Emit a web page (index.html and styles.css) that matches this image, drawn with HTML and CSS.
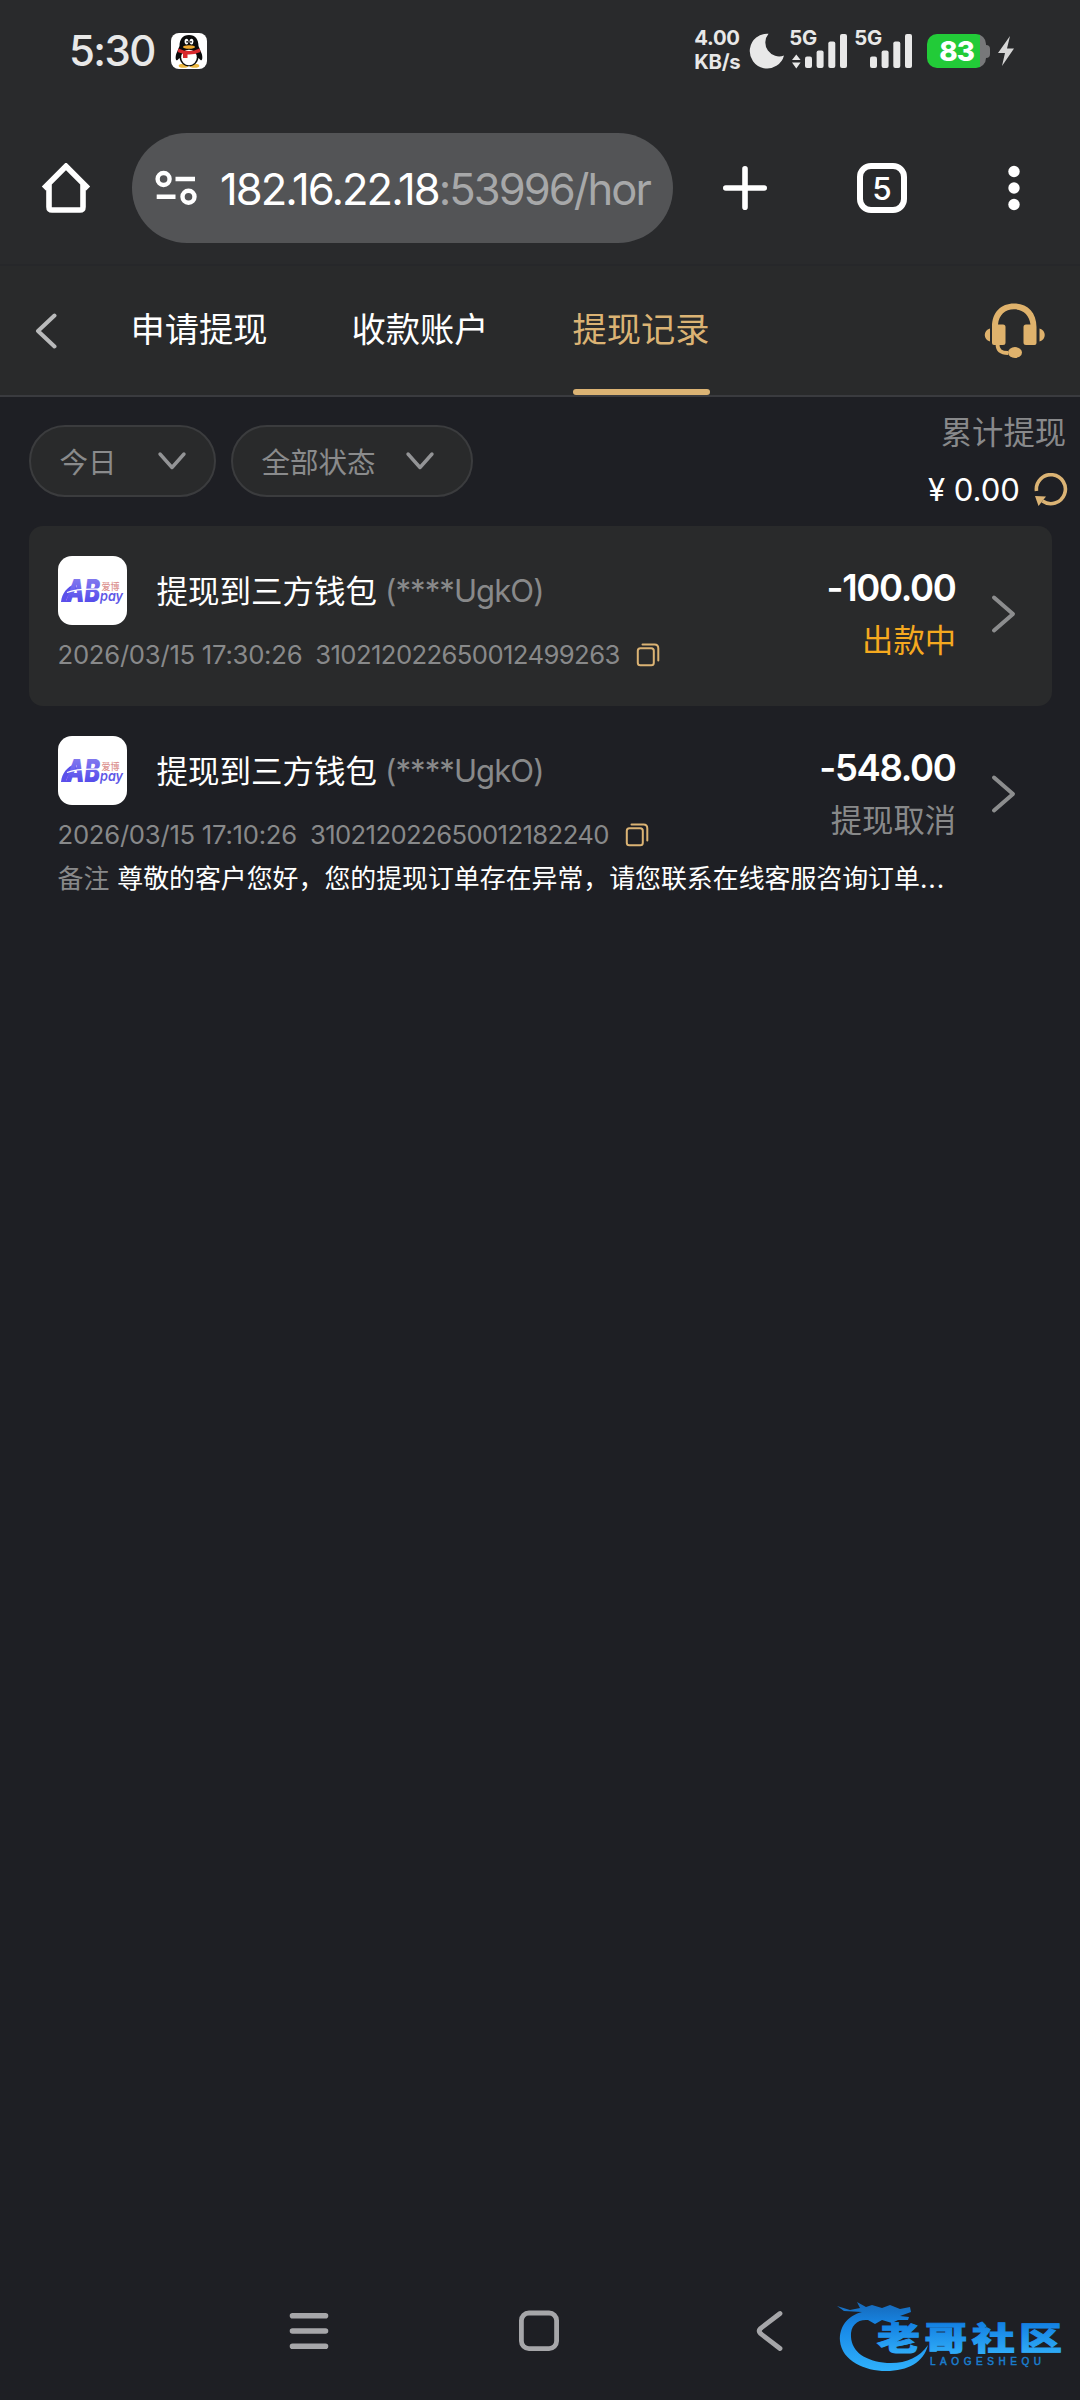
FILE: index.html
```html
<!DOCTYPE html>
<html lang="zh-CN">
<head>
<meta charset="utf-8">
<title>提现记录</title>
<link rel="stylesheet" href="styles.css">
</head>
<body>
<svg class="defs" width="0" height="0" aria-hidden="true">
  <defs>
    <linearGradient id="ab" x1="0" y1="0" x2="0" y2="1"><stop offset="0" stop-color="#8f86ee"/><stop offset=".5" stop-color="#6a62ee"/><stop offset="1" stop-color="#4a3fe8"/></linearGradient>
    <symbol id="copy" viewBox="0 0 24 24"><rect x="1.8" y="5.3" width="16" height="17" rx="2.5" fill="none" stroke="#dbb374" stroke-width="2"/><path d="M6.5 1.6H18.5Q22.3 1.6 22.3 5.4V17.5" fill="none" stroke="#dbb374" stroke-width="2" stroke-linecap="round"/></symbol>
    <symbol id="down" viewBox="0 0 30 20"><path d="M3 3L15 16.5L27 3" fill="none" stroke="#939496" stroke-width="3.4" stroke-linecap="round" stroke-linejoin="round"/></symbol>
    <symbol id="next" viewBox="0 0 26 40"><path d="M4 3.5L23 20L4 36.5" fill="none" stroke="#8c8d8e" stroke-width="4" stroke-linecap="round" stroke-linejoin="round"/></symbol>
    <symbol id="abpay" viewBox="0 0 69 69">
      <path d="M3 46C4 37 9 31 17 28L20 34C12 36 9 40 8 46Z" fill="#5a50ea"/>
      <text x="8" y="46" font-family="Inter" font-style="italic" font-weight="900" font-size="31" textLength="34" lengthAdjust="spacingAndGlyphs" fill="url(#ab)">AB</text>
      <path d="M9 36.500C17 33.200 29 32.800 41 33.200" fill="none" stroke="#fff" stroke-width="1.300"/>
      <text x="42" y="44.500" font-family="Inter" font-style="italic" font-weight="600" font-size="14" textLength="23" lengthAdjust="spacingAndGlyphs" fill="#5f57e6">pay</text>
      <text x="43.500" y="33.500" font-family="Noto Sans CJK SC" font-weight="500" font-size="9" fill="#dc9290">爱博</text>
    </symbol>
  </defs>
</svg>
<div class="screen">
  <header class="status">
    <span class="clock">5:30</span>
    <svg class="qq" viewBox="0 0 36 36">
      <rect width="36" height="36" rx="8" fill="#fff"/>
      <ellipse cx="12.500" cy="32.800" rx="4.800" ry="2" fill="#edb83f"/><ellipse cx="23.500" cy="32.800" rx="4.800" ry="2" fill="#edb83f"/>
      <path d="M18 2C11.500 2 8.500 6.500 8.500 13L5.200 21C4 25 5 28.500 6.500 27L8.500 25C9.500 30 13 33.300 18 33.300S26.500 30 27.500 25L29.500 27C31 28.500 32 25 30.800 21L27.500 13C27.500 6.500 24.500 2 18 2Z" fill="#0b0b0b"/>
      <ellipse cx="18" cy="24.500" rx="7.800" ry="7.800" fill="#fff"/>
      <path d="M7.500 15.500Q18 20.500 28.500 15.500L29.500 19Q22 22 16.500 21.500V25H12V20.800L6.600 19Z" fill="#d9282d"/>
      <ellipse cx="15.500" cy="8.600" rx="1.900" ry="2.800" fill="#fff"/><ellipse cx="20.500" cy="8.600" rx="1.900" ry="2.800" fill="#fff"/>
      <circle cx="16.100" cy="8.800" r=".9"/><circle cx="20" cy="8.800" r=".9"/>
      <ellipse cx="18" cy="14" rx="6" ry="1.700" fill="#efa92e"/>
    </svg>
    <span class="speed"><span>4.00</span><span class="unit">KB/s</span></span>
    <svg class="moon" viewBox="0 0 36 36"><path d="M19.500 .8A17.400 17.400 0 1 0 35 22.500A13.800 13.800 0 0 1 19.500 .8Z" fill="#e8e8e8"/></svg>
    <span class="signal">
      <span class="net">5G</span>
      <svg viewBox="0 0 58 36" fill="#e8e8e8"><path d="M2 26L6.300 20.500L10.600 26ZM2 28.500H10.600L6.300 34.500Z"/><rect x="15" y="22.500" width="7" height="11.500" rx="2"/><rect x="26.600" y="16.500" width="7" height="17.500" rx="2"/><rect x="38.300" y="7.500" width="7" height="26.500" rx="2"/><rect x="50" y="0" width="7" height="34" rx="2"/></svg>
    </span>
    <span class="signal second">
      <span class="net">5G</span>
      <svg viewBox="0 0 58 36" fill="#e8e8e8"><rect x="15" y="22.500" width="7" height="11.500" rx="2"/><rect x="26.600" y="16.500" width="7" height="17.500" rx="2"/><rect x="38.300" y="7.500" width="7" height="26.500" rx="2"/><rect x="50" y="0" width="7" height="34" rx="2"/></svg>
    </span>
    <span class="battery"><span class="level">83</span></span>
    <svg class="bolt" viewBox="0 0 18 30"><path d="M13 0L1 17H8L5 30L17 12.500H10Z" fill="#d6d6d6"/></svg>
  </header>

  <div class="toolbar">
    <svg class="home" viewBox="0 0 50 50"><path d="M2.800 25.500L25 3.200L47.200 25.500M8 21V44Q8 47 11 47H39Q42 47 42 44V21" fill="none" stroke="#fff" stroke-width="5.600" stroke-linejoin="miter"/></svg>
    <div class="url">
      <svg class="tune" viewBox="0 0 42 36" fill="none" stroke="#fff" stroke-width="4.400"><circle cx="8.600" cy="9" r="6"/><path d="M20.500 9H40M1.700 26.700H20.500"/><circle cx="33.500" cy="26.700" r="6"/></svg>
      <span class="addr">182.16.22.18<span class="dim">:53996/hor</span></span>
    </div>
    <svg class="plus" viewBox="0 0 44 44"><path d="M22 2.800V41.200M2.800 22H41.200" stroke="#fff" stroke-width="5.600" stroke-linecap="round"/></svg>
    <span class="count">5</span>
    <svg class="dots" viewBox="0 0 12 46" fill="#fff"><circle cx="6" cy="6.500" r="5.700"/><circle cx="6" cy="23" r="5.700"/><circle cx="6" cy="39.500" r="5.700"/></svg>
  </div>

  <nav class="tabs">
    <svg class="back" viewBox="0 0 22 36"><path d="M19.500 2.500L3 18L19.500 33.500" fill="none" stroke="#b9babb" stroke-width="4" stroke-linecap="round" stroke-linejoin="round"/></svg>
    <a class="tab">申请提现</a><a class="tab">收款账户</a><a class="tab active">提现记录</a>
    <svg class="service" viewBox="0 0 62 56" fill="#dfb26c">
      <path d="M8 24C8 9 17 .5 30 .5S52.500 9 52.500 24V40Q52.500 42 50.500 42H42Q39.500 42 39.500 39.500V24Q39.500 21.500 42 21.500H46.500C45.500 12 39 6.300 30 6.300S15 12 14 21.500H19Q21.500 21.500 21.500 24V39.500Q21.500 42 19 42H10Q8 42 8 40Z"/>
      <path d="M6 25.500V38.500C-1 37 -1 27 6 25.500ZM55.500 25.500V38.500C62.500 37 62.500 27 55.500 25.500Z"/>
      <path d="M13.500 41C13.500 47.500 17 50 24 50" fill="none" stroke="#dfb26c" stroke-width="3.800"/><ellipse cx="31" cy="49.500" rx="7" ry="5.400"/>
    </svg>
  </nav>

  <section class="filters">
    <div class="pill today"><span>今日</span><svg viewBox="0 0 30 20"><use href="#down"/></svg></div>
    <div class="pill state"><span>全部状态</span><svg viewBox="0 0 30 20"><use href="#down"/></svg></div>
    <div class="total">
      <span class="label">累计提现</span>
      <span class="sum"><span>¥ 0.00</span>
        <svg viewBox="0 0 34 34"><path d="M2.500 18A14.500 14.500 0 1 1 8.500 28" fill="none" stroke="#dbb374" stroke-width="3.600"/><path d="M1 23L12 23.500L4.500 33Z" fill="#dbb374"/></svg></span>
    </div>
  </section>

  <main>
    <article class="row filled">
      <div class="top">
        <div class="info">
          <div class="title"><svg class="logo" viewBox="0 0 69 69"><use href="#abpay"/></svg><span>提现到三方钱包</span><span class="acct">(****UgkO)</span></div>
          <div class="meta"><span>2026/03/15 17:30:26</span><span class="no">310212022650012499263</span><svg class="copy" viewBox="0 0 24 24"><use href="#copy"/></svg></div>
        </div>
        <div class="money"><span class="amount">-100.00</span><span class="result pending">出款中</span></div>
        <svg class="next" viewBox="0 0 26 40"><use href="#next"/></svg>
      </div>
    </article>
    <article class="row">
      <div class="top">
        <div class="info">
          <div class="title"><svg class="logo" viewBox="0 0 69 69"><use href="#abpay"/></svg><span>提现到三方钱包</span><span class="acct">(****UgkO)</span></div>
          <div class="meta"><span>2026/03/15 17:10:26</span><span class="no">310212022650012182240</span><svg class="copy" viewBox="0 0 24 24"><use href="#copy"/></svg></div>
        </div>
        <div class="money"><span class="amount">-548.00</span><span class="result">提现取消</span></div>
        <svg class="next" viewBox="0 0 26 40"><use href="#next"/></svg>
      </div>
      <p class="note"><span class="key">备注</span>尊敬的客户您好，您的提现订单存在异常，请您联系在线客服咨询订单<span class="more">...</span></p>
    </article>
  </main>

  <footer class="sysnav">
    <svg width="40" height="42" viewBox="0 0 40 42"><path d="M3.500 5.700H36.500M3.500 21H36.500M3.500 36.300H36.500" stroke="#a6a6a9" stroke-width="5.600" stroke-linecap="round"/></svg>
    <svg width="40" height="42" viewBox="0 0 40 42"><rect x="2.400" y="3" width="35.200" height="35.600" rx="7.500" fill="none" stroke="#a6a6a9" stroke-width="4.800"/></svg>
    <svg width="40" height="42" viewBox="0 0 40 42"><path d="M30 3.500L10.500 18.500Q8 21 10.500 23.500L30 38.500" fill="none" stroke="#a6a6a9" stroke-width="4.800" stroke-linecap="round"/></svg>
  </footer>

  <svg class="badge" viewBox="0 0 260 130">
    <defs><linearGradient id="sky" gradientUnits="userSpaceOnUse" x1="0" y1="32" x2="0" y2="100"><stop offset="0" stop-color="#1668b8"/><stop offset=".35" stop-color="#1787e6"/><stop offset="1" stop-color="#2fb0fb"/></linearGradient>
    <linearGradient id="word" x1="0" y1="0" x2="0" y2="1"><stop offset=".2" stop-color="#127fe2"/><stop offset="1" stop-color="#35b4fb"/></linearGradient></defs>
    <path d="M42 42C27 46 19 57 20 71C22 91 45 101 66 101C88 101 104 92 108 75C99 88 85 94 67 93C45 91 32 82 31 67C30 55 38 49 48 50L55 54L62 50L72 53L78 50L88 50L89 47L80 46L91 42L90 37L80 39L70 35L62 38L52 35L46 37L37 32L40 38L30 40L17 36L24 41Z" fill="url(#sky)"/>
    <text class="word" transform="translate(57 80) scale(1 .74)" font-size="43" textLength="185" fill="url(#word)" stroke="url(#word)" stroke-width="1.200">老哥社区</text>
    <text class="latin" x="110" y="94.500" font-size="10" textLength="111" fill="#1b7ccb" stroke="#1b7ccb" stroke-width=".5">LAOGESHEQU</text>
  </svg>
</div>
</body>
</html>
```
FILE: styles.css
```css
* { box-sizing: border-box; }
body { margin: 0; background: #1e1f24; font-family: Inter, "Noto Sans CJK SC", sans-serif; color: #fff; }
svg { display: block; flex: none; }
.defs { position: absolute; }
.screen { position: relative; width: 1080px; height: 2400px; display: flex; flex-direction: column; overflow: hidden; white-space: nowrap; }

.status { height: 111px; padding: 0 65px 9px 69px; display: flex; align-items: center; background: #292a2c; color: #e8e8e8; flex: none; }
.clock { font-size: 42px; font-weight: 500; letter-spacing: -1.6px; line-height: 50px; width: 102px; }
.qq { width: 36px; height: 36px; }
.speed { margin-left: 487.500px; width: 55px; display: flex; flex-direction: column; font-size: 20.3px; font-weight: 700; line-height: 24px; letter-spacing: -.3px; padding-bottom: 3px; }
.moon { width: 36px; height: 36px; }
.signal { position: relative; width: 58px; height: 34px; margin-left: 5px; }
.signal svg { width: 58px; height: 36px; }
.second { margin-left: 7px; }
.net { position: absolute; left: -1px; top: -8.500px; font-size: 20.3px; font-weight: 700; line-height: 24px; }
.battery { position: relative; width: 59px; height: 34px; border-radius: 10px; margin-left: 14px; background: linear-gradient(90deg, #22cb38 53px, #77787a 53px); display: flex; align-items: center; justify-content: center; }
.battery::after { content: ""; position: absolute; left: 59px; top: 10.500px; width: 4px; height: 13px; border-radius: 0 5px 5px 0; background: #77787a; }
.level { font-size: 27.700px; font-weight: 800; letter-spacing: -1px; color: #fff; line-height: 34px; }
.bolt { width: 18px; height: 30px; margin-left: 11px; }

.toolbar { height: 155px; flex: none; display: flex; align-items: center; padding: 1px 60px 0 41px; background: #292a2c; border-bottom: 2px solid #26272a; }
.home { width: 50px; height: 50px; }
.url { width: 541px; height: 110px; border-radius: 55px; margin-left: 41px; padding-left: 23px; background: #535456; display: flex; align-items: center; flex: none; }
.tune { width: 42px; height: 36px; }
.addr { margin-left: 23px; font-size: 43.500px; letter-spacing: -1.950px; line-height: 60px; padding-top: 2px; }
.dim { color: #a7a8a9; }
.plus { width: 44px; height: 44px; margin-left: 50px; }
.count { width: 50px; height: 50px; margin-left: 90px; border: 6px solid #fff; border-radius: 14px; font-size: 31.500px; font-weight: 500; line-height: 39px; text-align: center; }
.dots { width: 12px; height: 46px; margin-left: 101px; }

.tabs { height: 131px; flex: none; display: flex; align-items: center; background: #292a2b; border-bottom: 2px solid #3a3b3f; padding: 0 34px 0 35px; }
.back { width: 22px; height: 36px; margin-right: 73.500px; }
.tab { height: 129px; line-height: 128px; font-size: 34.250px; margin-right: 84px; }
.active { color: #dbb374; position: relative; }
.active::after { content: ""; position: absolute; left: 0; right: 0; bottom: 0; height: 6px; border-radius: 3px; background: #dbb374; }
.service { width: 62px; height: 56px; margin-left: auto; }

.filters { height: 129px; flex: none; display: flex; align-items: flex-start; padding: 0 13px 0 28.500px; }
.pill { height: 72px; margin-top: 28px; border: 2px solid #3b3c3e; border-radius: 36px; background: #292a2b; display: flex; align-items: center; justify-content: space-between; color: #8a8b8c; font-size: 28.500px; }
.pill span { padding-bottom: 2px; }
.pill svg { width: 30px; height: 20px; }
.today { width: 187px; padding: 0 27px 0 29px; }
.state { width: 242px; margin-left: 15.500px; padding: 0 36px 0 28.500px; }
.total { margin-left: auto; display: flex; flex-direction: column; align-items: flex-end; }
.label { font-size: 31.300px; line-height: 50px; margin-top: 11px; margin-right: 1px; color: #88898b; }
.sum { display: flex; align-items: center; gap: 14px; height: 50px; margin-top: 7px; font-size: 31.100px; }
.sum svg { width: 34px; height: 34px; margin-right: -1px; }

.row { margin: 0 28px 0 28.500px; height: 180px; padding: 29px 36px 0 29px; border-radius: 14px; }
.filled { background: #292a2b; }
.top { display: flex; align-items: center; height: 115px; }
.info { flex: 1; }
.title { display: flex; align-items: center; height: 69px; font-size: 31.500px; line-height: 69px; padding-top: 0; }
.title span { padding-top: 2px; }
.logo { width: 69px; height: 69px; border-radius: 14px; background: #fff; margin-right: 30px; }
.acct { color: #88898a; font-size: 31.100px; letter-spacing: -.95px; margin-left: 8px; }
.meta { display: flex; align-items: center; height: 30px; margin-top: 15px; font-size: 25.700px; letter-spacing: -.27px; color: #88898a; }
.no { letter-spacing: -.62px; margin-left: 13px; }
.copy { width: 24px; height: 24px; margin-left: 16.500px; }
.money { display: flex; flex-direction: column; align-items: flex-end; padding-top: 4px; line-height: 53px; }
.amount { font-size: 36.500px; font-weight: 600; letter-spacing: -1.350px; margin-right: 1.500px; }
.result { font-size: 31.300px; color: #88898a; margin-right: 1px; }
.pending { color: #f5a91f; }
.next { width: 26px; height: 40px; margin: 2px 0 0 33px; }
.note { margin: 14px 0 0; font-size: 25.900px; line-height: 30px; }
.key { color: #88898a; margin-right: 8px; }
.more { letter-spacing: 1px; }

.sysnav { margin-top: auto; height: 138px; flex: none; display: flex; align-items: center; justify-content: space-between; padding: 0 290.500px 0 288.500px; }
.badge { position: absolute; left: 820px; top: 2270px; width: 260px; height: 130px; }
.word { font-family: "Noto Sans CJK SC", sans-serif; font-weight: 900; }
.latin { font-family: "Liberation Sans", sans-serif; }
```
